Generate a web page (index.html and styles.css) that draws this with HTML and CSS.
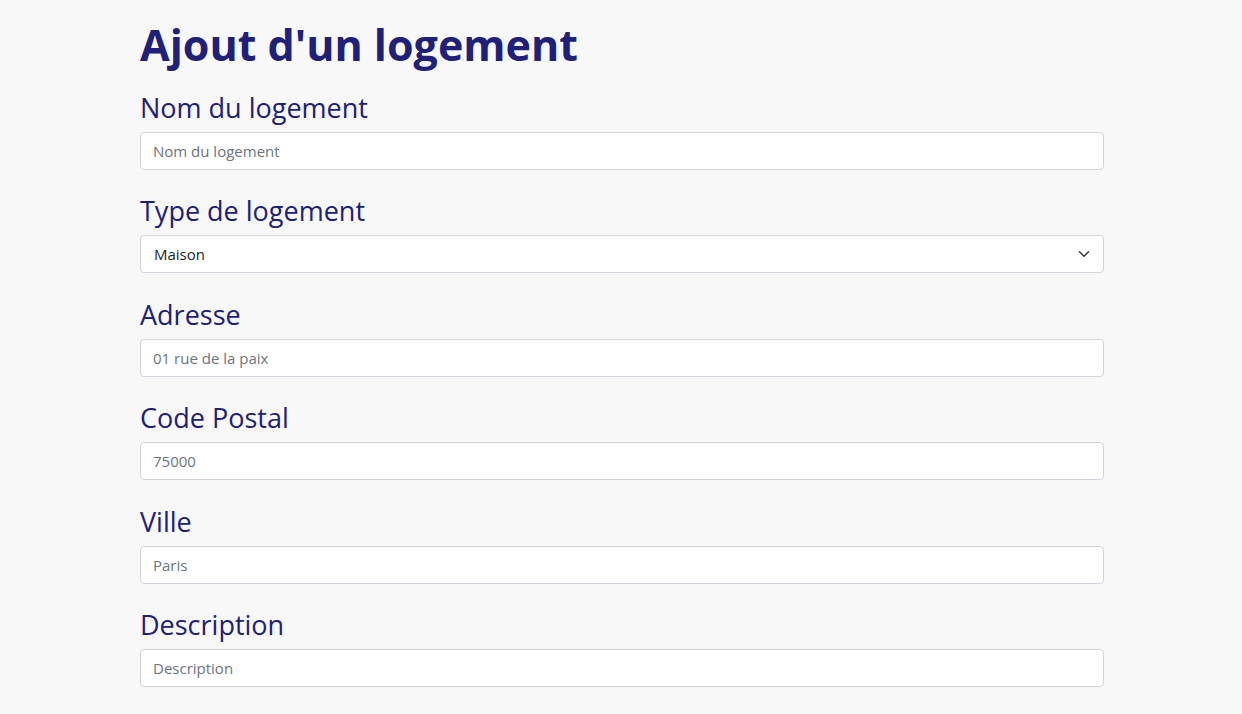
FILE: index.html
```html
<!DOCTYPE html>
<html lang="fr">
<head>
<meta charset="utf-8">
<title>Ajout d'un logement</title>
<link rel="stylesheet" href="styles.css">
</head>
<body>
<main class="page">
  <h1 class="title">Ajout d'un logement</h1>
  <form class="form">
    <div class="group">
      <label class="label" for="nom">Nom du logement</label>
      <input class="control" id="nom" type="text" placeholder="Nom du logement">
    </div>
    <div class="group">
      <label class="label" for="type">Type de logement</label>
      <div class="select-wrap">
        <select class="control select" id="type">
          <option>Maison</option>
          <option>Appartement</option>
        </select>
        <svg class="chevron" width="16" height="16" viewBox="0 0 16 16" aria-hidden="true"><path d="M2 5l6 6 6-6" fill="none" stroke="#343a40" stroke-width="2" stroke-linecap="round" stroke-linejoin="round"/></svg>
      </div>
    </div>
    <div class="group">
      <label class="label" for="adresse">Adresse</label>
      <input class="control" id="adresse" type="text" placeholder="01 rue de la paix">
    </div>
    <div class="group">
      <label class="label" for="cp">Code Postal</label>
      <input class="control" id="cp" type="text" placeholder="75000">
    </div>
    <div class="group">
      <label class="label" for="ville">Ville</label>
      <input class="control" id="ville" type="text" placeholder="Paris">
    </div>
    <div class="group">
      <label class="label" for="desc">Description</label>
      <input class="control" id="desc" type="text" placeholder="Description">
    </div>
  </form>
</main>
</body>
</html>
```
FILE: styles.css
```css
* { box-sizing: border-box; }
html, body {
  margin: 0;
  background: #f8f8f8;
  font-family: "Open Sans", "Noto Sans", sans-serif;
}
body {
  padding: 0 138px 0 140px;
}
.page {
  padding-top: 18px;
}
.title {
  margin: 0 0 19px 0;
  font-size: 43px;
  line-height: 54px;
  font-weight: 700;
  color: #20207a;
}
.form {
  display: flex;
  flex-direction: column;
  gap: 24.4px;
}
.group {
  display: flex;
  flex-direction: column;
  gap: 8px;
}
.label {
  font-size: 27px;
  line-height: 33px;
  color: #20207a;
}
.control {
  width: 100%;
  height: 38px;
  padding: 0 12px;
  border: 1px solid #ced4da;
  border-radius: 4px;
  background: #fff;
  font-family: inherit;
  font-size: 15px;
  color: #212529;
  outline: none;
}
.control::placeholder { color: #6c757d; }
.select-wrap { position: relative; }
.select {
  appearance: none;
  -webkit-appearance: none;
  padding-left: 13px;
}
.chevron {
  position: absolute;
  right: 14px;
  top: 13px;
  width: 12px;
  height: 12px;
  pointer-events: none;
}
```
